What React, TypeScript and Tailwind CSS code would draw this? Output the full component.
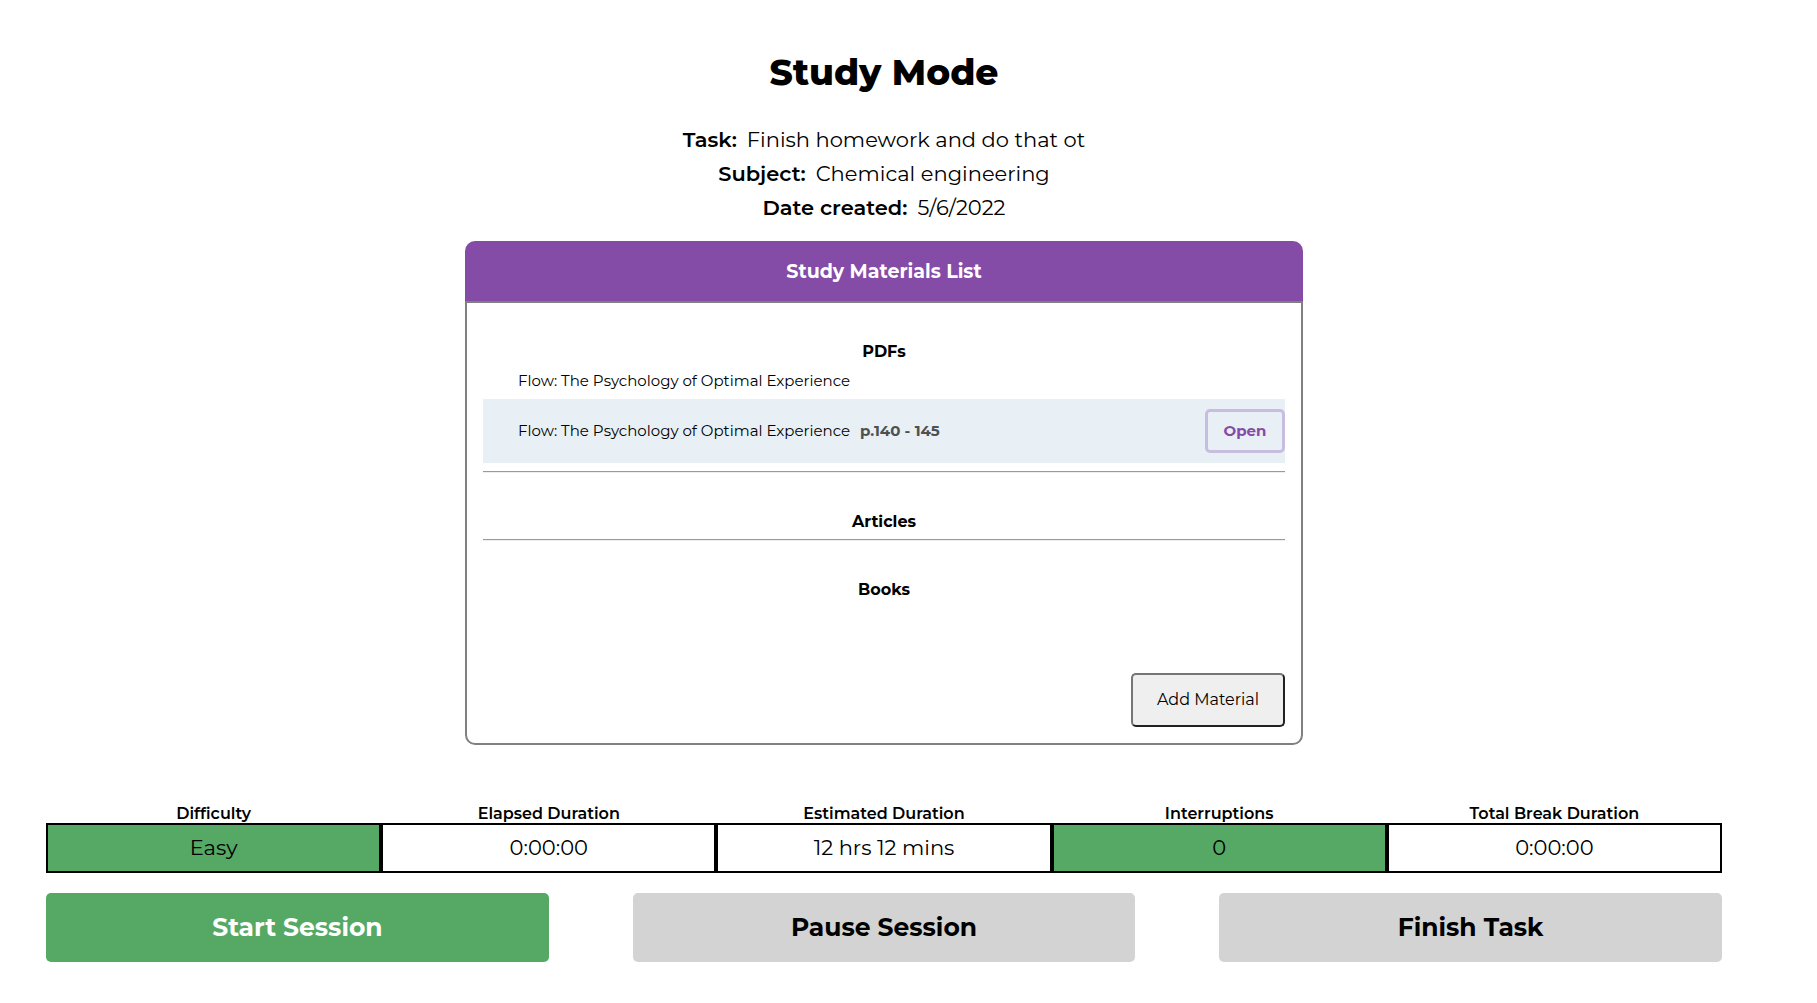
type Detail = { label: string; value: string };
type Stat = { label: string; value: string; highlighted?: boolean };

const details: Detail[] = [
  { label: "Task:", value: "Finish homework and do that ot" },
  { label: "Subject:", value: "Chemical engineering" },
  { label: "Date created:", value: "5/6/2022" },
];

const stats: Stat[] = [
  { label: "Difficulty", value: "Easy", highlighted: true },
  { label: "Elapsed Duration", value: "0:00:00" },
  { label: "Estimated Duration", value: "12 hrs 12 mins" },
  { label: "Interruptions", value: "0", highlighted: true },
  { label: "Total Break Duration", value: "0:00:00" },
];

function SectionHeading({ children }: { children: string }) {
  return <h3 className="pt-10 text-center text-base leading-[18px] font-bold">{children}</h3>;
}

function Divider() {
  return <hr className="mt-2 h-0.5 border-t border-b border-t-[#9a9a9a] border-b-[#eeeeee]" />;
}

function MaterialsCard() {
  return (
    <section className="mx-auto mt-4 flex w-1/2 flex-col">
      <h2 className="rounded-t-[10px] bg-[#844ba7] pt-0.5 text-center text-[19px] leading-[58px] font-bold text-white">
        Study Materials List
      </h2>
      <div className="flex flex-col rounded-b-[10px] border-2 border-[#808080] px-4 pb-4">
        <SectionHeading>PDFs</SectionHeading>
        <ul className="text-[15px] leading-5">
          <li className="flex h-[38px] items-center pt-0.5 pl-[35px]">Flow: The Psychology of Optimal Experience</li>
          <li className="flex h-16 items-center gap-2.5 bg-[#e8f0f6] pl-[35px]">
            <span>Flow: The Psychology of Optimal Experience</span>
            <span className="font-bold text-[#505050]">p.140 - 145</span>
            <button
              type="button"
              className="ml-auto h-11 w-20 rounded-[5px] border-3 border-[#c9bddf] font-bold text-[#844ba7]"
            >
              Open
            </button>
          </li>
        </ul>
        <Divider />
        <SectionHeading>Articles</SectionHeading>
        <Divider />
        <SectionHeading>Books</SectionHeading>
        <button
          type="button"
          className="mt-[74px] h-[54px] w-[154px] self-end rounded-[5px] border-2 border-t-[#767676] border-r-[#212121] border-b-[#212121] border-l-[#767676] bg-[#efefef] text-base"
        >
          Add Material
        </button>
      </div>
    </section>
  );
}

export default function App() {
  return (
    <main className="bg-white pt-[50px] pr-[95px] pb-10 pl-[46px] font-['Montserrat','Inter',sans-serif] text-black">
      <h1 className="text-center text-4xl leading-[44px] font-extrabold">Study Mode</h1>

      <dl className="mt-[29px] text-[21px] leading-[34px]">
        {details.map((d) => (
          <div key={d.label} className="flex justify-center gap-2.5">
            <dt className="font-semibold">{d.label}</dt>
            <dd>{d.value}</dd>
          </div>
        ))}
      </dl>

      <MaterialsCard />

      <dl className="mt-[60px] grid grid-cols-5 text-center">
        {stats.map((s) => (
          <div key={s.label}>
            <dt className="text-base leading-[18px] font-semibold">{s.label}</dt>
            <dd
              className={
                s.highlighted
                  ? "border-2 border-black bg-[#55a965] text-[21px] leading-[46px]"
                  : "border-2 border-black text-[21px] leading-[46px]"
              }
            >
              {s.value}
            </dd>
          </div>
        ))}
      </dl>

      <div className="mt-5 grid grid-cols-3 gap-x-[5%] text-[25px] leading-[69px] font-bold">
        <button type="button" className="rounded-[5px] bg-[#55a965] text-white">
          Start Session
        </button>
        <button type="button" className="rounded-[5px] bg-[#d3d3d3]">
          Pause Session
        </button>
        <button type="button" className="rounded-[5px] bg-[#d3d3d3]">
          Finish Task
        </button>
      </div>
    </main>
  );
}
